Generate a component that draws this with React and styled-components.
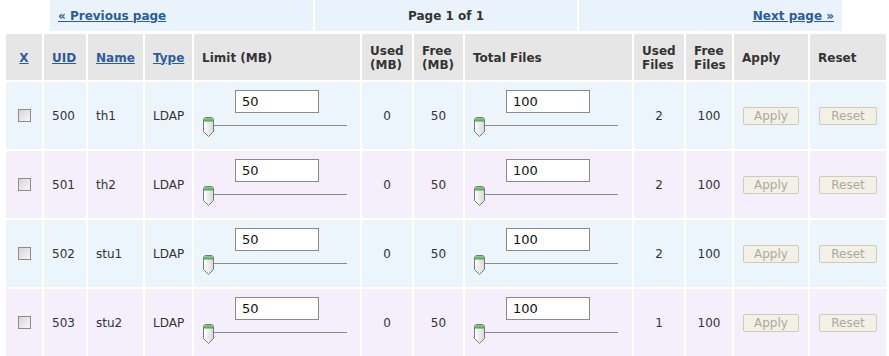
import React from "react";
import styled, { createGlobalStyle } from "styled-components";

const Global = createGlobalStyle`
  html, body { margin: 0; padding: 0; background: #ffffff; }
  body { font-family: "DejaVu Sans", Verdana, sans-serif; font-size: 12px; color: #333; }
`;

const Page = styled.div`
  width: 889px;
  height: 356px;
  overflow: hidden;
`;

const Pager = styled.div`
  margin-left: 50px;
  width: 792px;
  height: 31px;
  display: grid;
  grid-template-columns: 263px 262px 263px;
  column-gap: 2px;
`;

const PagerCell = styled.div`
  background: #eaf3fc;
  display: flex;
  align-items: center;
  justify-content: ${(p) => p.$align || "flex-start"};
  padding: 0 8px;
  font-weight: bold;
  font-size: 12px;
  color: #333;
`;

const Link = styled.a`
  color: #2b5c9e;
  text-decoration: underline;
  font-weight: bold;
  cursor: pointer;
`;

const Table = styled.table`
  margin: 1px 0 0 4px;
  border-collapse: separate;
  border-spacing: 2px;
  table-layout: fixed;
  width: 884px;
`;

const Th = styled.th`
  background: #e6e6e6;
  height: 45px;
  padding: 1px 8px 0;
  text-align: ${(p) => p.$align || "left"};
  vertical-align: middle;
  font-weight: bold;
  font-size: 12px;
  line-height: 14px;
  color: #333;
`;

const Td = styled.td`
  background: ${(p) => (p.$odd ? "#f5effc" : "#ecf5fc")};
  height: 67px;
  padding: 0 8px;
  vertical-align: middle;
  font-size: 12px;
  color: #333;
  text-align: ${(p) => p.$align || "left"};
`;

const SliderTd = styled(Td)`
  padding: 0 0 0 9px;
`;

const Check = styled.span`
  display: block;
  width: 11px;
  height: 11px;
  margin-left: 4px;
  border: 1px solid #8c8c8c;
  background: linear-gradient(135deg, #d6d6d6, #f6f6f6);
`;

const SliderBox = styled.div`
  display: flex;
  flex-direction: column;
  width: 144px;
  padding-bottom: 4px;
`;

const NumInput = styled.input`
  box-sizing: border-box;
  width: 84px;
  height: 23px;
  margin-left: 32px;
  border: 1px solid #8a8a8a;
  background: #fff;
  font-family: "DejaVu Sans", Verdana, sans-serif;
  font-size: 13px;
  color: #111;
  padding: 0 6px;
  outline: none;
`;

const Track = styled.div`
  position: relative;
  margin-top: 4px;
  height: 20px;
  &::before {
    content: "";
    position: absolute;
    left: 5px;
    right: 0;
    top: 8px;
    height: 1px;
    background: #8a8a8a;
  }
`;

const Thumb = styled.svg`
  position: absolute;
  left: 0;
  top: 0;
`;

const Btn = styled.button`
  box-sizing: border-box;
  width: ${(p) => p.$w}px;
  height: 18px;
  margin-left: 1px;
  border: 1px solid #cfcbb8;
  border-radius: 2px;
  background: #f3f1e6;
  color: #aaa9a0;
  font-family: "DejaVu Sans", Verdana, sans-serif;
  font-size: 12px;
  padding: 0;
`;

const Slider = ({ value }) => (
  <SliderBox>
    <NumInput defaultValue={value} />
    <Track>
      <Thumb width="11" height="21" viewBox="0 0 11 21">
        <defs>
          <linearGradient id="tb" x1="0" y1="0" x2="1" y2="0">
            <stop offset="0" stopColor="#ffffff" />
            <stop offset="1" stopColor="#d8d8d8" />
          </linearGradient>
          <linearGradient id="tg" x1="0" y1="0" x2="0" y2="1">
            <stop offset="0" stopColor="#8fd08f" />
            <stop offset="1" stopColor="#4f9f4f" />
          </linearGradient>
        </defs>
        <path
          d="M0.5 3 Q0.5 0.5 3 0.5 H8 Q10.5 0.5 10.5 3 V14.5 L5.5 19.5 L0.5 14.5 Z"
          fill="url(#tb)"
          stroke="#6e7f6e"
        />
        <path d="M1 3 Q1 1 3 1 H8 Q10 1 10 3 V4.5 H1 Z" fill="url(#tg)" />
      </Thumb>
    </Track>
  </SliderBox>
);

const rows = [
  { uid: 500, name: "th1", usedFiles: 2 },
  { uid: 501, name: "th2", usedFiles: 2 },
  { uid: 502, name: "stu1", usedFiles: 2 },
  { uid: 503, name: "stu2", usedFiles: 1 },
];

const widths = [36, 42, 55, 47, 166, 50, 49, 167, 50, 46, 74, 76];

export default function App() {
  return (
    <Page>
      <Global />
      <Pager>
        <PagerCell>
          <Link>« Previous page</Link>
        </PagerCell>
        <PagerCell $align="center">Page 1 of 1</PagerCell>
        <PagerCell $align="flex-end">
          <Link>Next page »</Link>
        </PagerCell>
      </Pager>
      <Table>
        <colgroup>
          {widths.map((w, i) => (
            <col key={i} style={{ width: w }} />
          ))}
        </colgroup>
        <thead>
          <tr>
            <Th $align="center">
              <Link>X</Link>
            </Th>
            <Th>
              <Link>UID</Link>
            </Th>
            <Th>
              <Link>Name</Link>
            </Th>
            <Th>
              <Link>Type</Link>
            </Th>
            <Th>Limit (MB)</Th>
            <Th>
              Used
              <br />
              (MB)
            </Th>
            <Th>
              Free
              <br />
              (MB)
            </Th>
            <Th>Total Files</Th>
            <Th>
              Used
              <br />
              Files
            </Th>
            <Th>
              Free
              <br />
              Files
            </Th>
            <Th>Apply</Th>
            <Th>Reset</Th>
          </tr>
        </thead>
        <tbody>
          {rows.map((r, i) => {
            const odd = i % 2 === 1;
            return (
              <tr key={r.uid}>
                <Td $odd={odd}>
                  <Check />
                </Td>
                <Td $odd={odd}>{r.uid}</Td>
                <Td $odd={odd}>{r.name}</Td>
                <Td $odd={odd}>LDAP</Td>
                <SliderTd $odd={odd}>
                  <Slider value="50" />
                </SliderTd>
                <Td $odd={odd} $align="center">0</Td>
                <Td $odd={odd} $align="center">50</Td>
                <SliderTd $odd={odd}>
                  <Slider value="100" />
                </SliderTd>
                <Td $odd={odd} $align="center">{r.usedFiles}</Td>
                <Td $odd={odd} $align="center">100</Td>
                <Td $odd={odd}>
                  <Btn $w={56} disabled>Apply</Btn>
                </Td>
                <Td $odd={odd}>
                  <Btn $w={58} disabled>Reset</Btn>
                </Td>
              </tr>
            );
          })}
        </tbody>
      </Table>
    </Page>
  );
}
